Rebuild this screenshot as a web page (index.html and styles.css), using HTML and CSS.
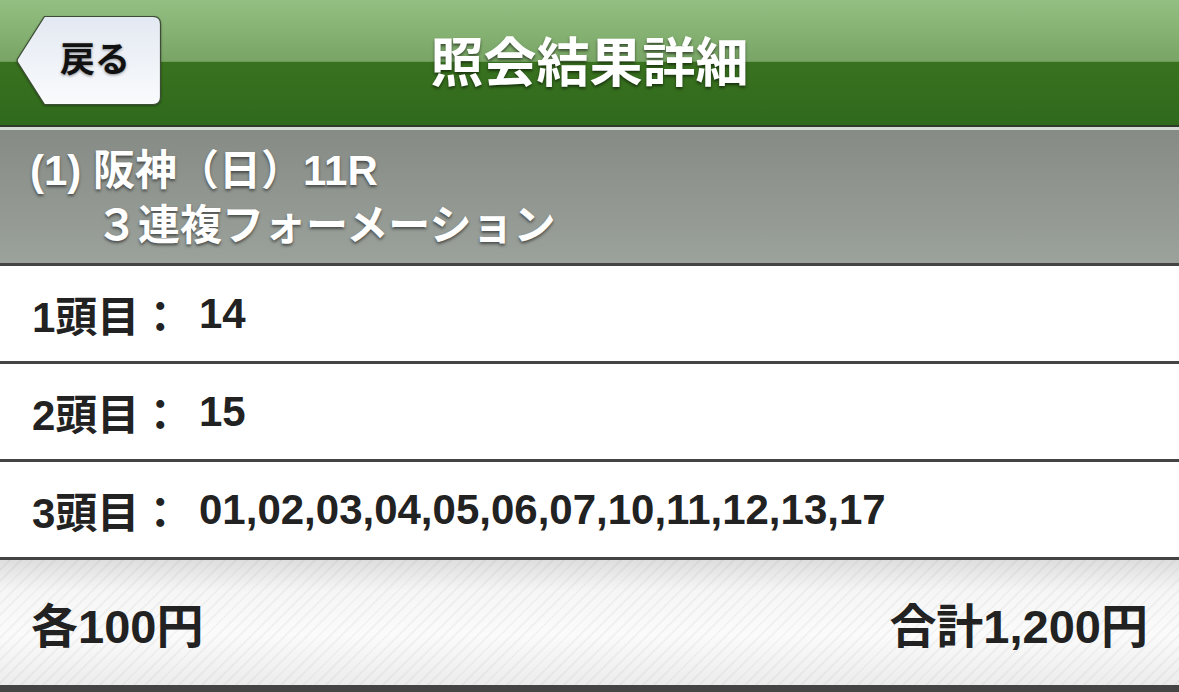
FILE: index.html
```html
<!DOCTYPE html>
<html lang="ja">
<head>
    <meta charset="UTF-8">
    <title>照会結果詳細</title>
    <link rel="stylesheet" href="styles.css">
</head>
<body>
<div class="nav">
    <div class="nav-left">
        <a class="back" href="#">
            <svg class="back-shape" width="146" height="90" viewBox="0 0 146 90">
                <defs>
                    <linearGradient id="btnbg" x1="0" y1="0" x2="0" y2="1">
                        <stop offset="0" stop-color="#e3e9f2"/>
                        <stop offset="1" stop-color="#fafbfd"/>
                    </linearGradient>
                </defs>
                <path d="M28.5 0.5 H137 Q144.5 0.5 144.5 8 V81 Q144.5 88.5 137 88.5 H28.5 L1.5 46 Q0.8 44.5 1.5 43 Z" fill="url(#btnbg)" stroke="#3d4d36" stroke-width="1.2"/>
            </svg>
            <span class="back-text">戻る</span>
        </a>
    </div>
    <h1 class="nav-title">照会結果詳細</h1>
    <div></div>
</div>

<div class="race">
    <p class="race-name">(1) 阪神（日）11R</p>
    <p class="race-type">３連複フォーメーション</p>
</div>

<div class="row"><span class="label">1頭目：</span><span class="value">14</span></div>
<div class="row"><span class="label">2頭目：</span><span class="value">15</span></div>
<div class="row"><span class="label">3頭目：</span><span class="value">01,02,03,04,05,06,07,10,11,12,13,17</span></div>

<div class="total">
    <span>各100円</span>
    <span>合計1,200円</span>
</div>
</body>
</html>
```

FILE: styles.css
```css
body {
    margin: 0;
    background: #454545;
    font-family: "Liberation Sans", "Noto Sans CJK JP", sans-serif;
    font-weight: bold;
    color: #222;
}
p, h1 {
    margin: 0;
}

/* title bar */
.nav {
    display: grid;
    grid-template-columns: 1fr auto 1fr;
    align-items: center;
    height: 125px;
    background: linear-gradient(#94bf82, #78a565 49%, #39721f 50%, #2f691c);
    border-bottom: 2px solid #2e3a2a;
}
.nav-left {
    padding-left: 16px;
}
.back {
    position: relative;
    display: block;
    width: 146px;
    height: 90px;
    margin-top: -3px;
    text-decoration: none;
    color: #111;
}
.back-shape {
    position: absolute;
    top: 0;
    left: 0;
    filter: drop-shadow(0 1px 1px rgba(0,0,0,.35));
}
.back-text {
    position: absolute;
    top: 0;
    left: 44px;
    width: 70px;
    line-height: 88px;
    font-size: 35px;
    text-align: center;
    text-shadow: 0 1px 3px rgba(0,0,0,.45);
}
.nav-title {
    font-size: 53px;
    color: #fff;
    margin-top: -8px;
    text-shadow: 0 2px 3px rgba(0,0,0,.55);
}

/* race band */
.race {
    height: 139px;
    box-sizing: border-box;
    border-top: 3px solid #d4dbd4;
    border-bottom: 3px solid #444;
    background: linear-gradient(#868b86, #9ba19b);
    color: #fff;
    font-size: 42px;
    text-shadow: 0 2px 3px rgba(0,0,0,.5);
    padding: 14px 0 0 30px;
}
.race-name {
    line-height: 54px;
}
.race-type {
    line-height: 56px;
    padding-left: 66px;
}

/* rows */
.row {
    display: flex;
    align-items: center;
    height: 95px;
    padding-left: 32px;
    background: #fff;
    border-bottom: 3px solid #444;
    font-size: 42px;
}
.label {
    width: 167px;
}

/* total */
.total {
    display: flex;
    justify-content: space-between;
    align-items: center;
    height: 125px;
    padding: 0 31px;
    border-bottom: 3px solid #444;
    font-size: 47px;
    background:
        repeating-linear-gradient(135deg, rgba(0,0,0,0) 0, rgba(0,0,0,0) 6px, rgba(0,0,0,.035) 6px, rgba(0,0,0,.035) 8px),
        linear-gradient(#dedede, #f6f6f6 25%, #fbfbfb 60%, #ececec);
}
```
